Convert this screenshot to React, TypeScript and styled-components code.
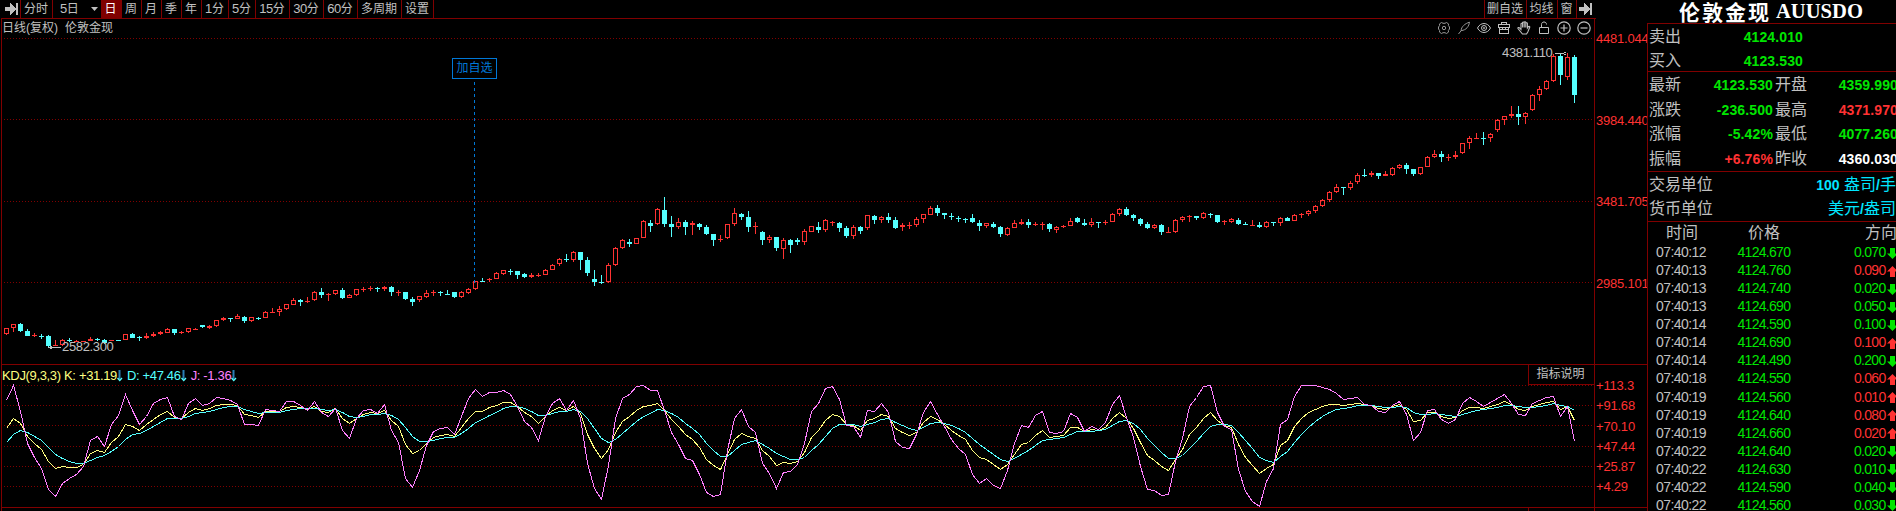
import React from 'react';
import styled, { createGlobalStyle } from 'styled-components';

const c = {
  line: '#800000',
  red: '#ff3232',
  green: '#00e600',
  cyan: '#54ffff',
  text: '#c0c0c0',
  aqua: '#00e5ff',
  blue: '#0078d7',
  k: '#ffff80',
  j: '#ff80ff',
};

const sans = '"Liberation Sans", "Noto Sans CJK SC", sans-serif';

const Global = createGlobalStyle`
  * { box-sizing: border-box; }
  html, body { margin: 0; background: #000; overflow: hidden; }
  body { font-family: ${sans}; color: ${c.text}; }
`;

const Screen = styled.div`
  width: 1896px;
  height: 511px;
  display: flex;
  background: #000;
  overflow: hidden;
`;

const Workspace = styled.div`
  width: 1647px;
  flex: none;
  display: flex;
  flex-direction: column;
`;

const Toolbar = styled.div`
  height: 19px;
  width: 1595px;
  display: flex;
  margin-left: 1px;
  padding-left: 2px;
  border-bottom: 1px solid ${c.line};
`;

const Tab = styled.div<{ $w: number; $active?: boolean; $last?: boolean }>`
  width: ${(p) => p.$w}px;
  height: 18px;
  flex: none;
  display: flex;
  align-items: center;
  justify-content: center;
  padding-right: 1px;
  border-right: 1px solid ${(p) => (p.$last ? 'transparent' : c.line)};
  font-size: 12px;
  line-height: 18px;
  white-space: nowrap;
  background: ${(p) => (p.$active ? c.line : 'transparent')};
  color: ${(p) => (p.$active ? '#fff' : c.text)};
`;

const Num = styled.span`
  font-size: 13px;
  letter-spacing: -0.4px;
`;

const Spring = styled.div`
  flex: 1;
  border-right: 1px solid ${c.line};
`;

const DayPick = styled.div`
  width: 48px;
  flex: none;
  display: flex;
  align-items: center;
  justify-content: space-between;
  padding: 0 3px 0 7px;
  font-size: 12px;
  line-height: 18px;
`;

const Body = styled.div`
  flex: 1;
  display: flex;
  margin-left: 1px;
  border-left: 1px solid ${c.line};
`;

const Charts = styled.div`
  width: 1592px;
  flex: none;
  display: flex;
  flex-direction: column;
`;

const PricePane = styled.div`
  position: relative;
  height: 346px;
  border-bottom: 1px solid ${c.line};
`;

const PaneHead = styled.div`
  height: 19px;
  display: flex;
  justify-content: space-between;
  font-size: 12px;
  line-height: 18px;
`;

const PaneTitle = styled.div`
  display: flex;
  gap: 7px;
`;

const IconRow = styled.div`
  display: flex;
  gap: 6px;
  padding: 2px 3px 0 0;
  svg { display: block; }
`;

const Plot = styled.svg`
  display: block;
  overflow: visible;
`;

const Callout = styled.div`
  position: absolute;
  left: 450px;
  top: 39px;
  width: 45px;
  height: 21px;
  border: 1px solid ${c.blue};
  color: ${c.blue};
  font-size: 12px;
  line-height: 19px;
  text-align: center;
`;

const KdjPane = styled.div`
  height: 143px;
  border-bottom: 1px solid ${c.line};
`;

const KdjHead = styled.div`
  height: 20px;
  display: flex;
  justify-content: space-between;
`;

const Legend = styled.div`
  display: flex;
  font-size: 13px;
  letter-spacing: -0.34px;
  line-height: 21px;
  white-space: pre;
`;

const Reading = styled.span<{ $color: string }>`
  display: flex;
  align-items: center;
  margin-right: 4px;
  color: ${(p) => p.$color};
`;

const HelpButton = styled.div`
  width: 66px;
  height: 20px;
  padding-right: 2px;
  border-left: 1px solid ${c.line};
  border-bottom: 1px solid ${c.line};
  font-size: 12px;
  line-height: 19px;
  text-align: center;
`;

const Foot = styled.div`
  flex: 1;
  margin-right: 65px;
  border-right: 1px solid ${c.line};
`;

const Axis = styled.div`
  width: 53px;
  flex: none;
  border-left: 1px solid ${c.line};
  overflow: hidden;
`;

const AxisBlock = styled.div<{ $h: number; $top: number }>`
  height: ${(p) => p.$h}px;
  padding-top: ${(p) => p.$top}px;
  border-bottom: 1px solid ${c.line};
`;

const AxisLabel = styled.div<{ $step: number }>`
  height: ${(p) => p.$step}px;
  padding-left: 1px;
  font-size: 13px;
  letter-spacing: -0.2px;
  line-height: 16px;
  color: ${c.red};
`;

const Side = styled.div`
  width: 249px;
  flex: none;
  overflow: hidden;
`;

const Title = styled.div`
  height: 23px;
  display: flex;
  align-items: center;
  gap: 7px;
  padding: 0 0 1px 32px;
  color: #fff;
  white-space: nowrap;
  font: 700 20.6px/20px "Liberation Serif", serif;
`;

const TitleName = styled.span`
  font: 700 21px/20px "Noto Sans CJK SC", sans-serif;
  letter-spacing: 2px;
  margin-right: -2px;
`;

const Panel = styled.div`
  border-left: 1px solid ${c.line};
`;

const Group = styled.div<{ $h: number; $pad: number }>`
  height: ${(p) => p.$h}px;
  padding-top: ${(p) => p.$pad}px;
  border-top: 1px solid ${c.line};
`;

const QuoteRow = styled.div<{ $h: number }>`
  height: ${(p) => p.$h}px;
  display: grid;
  grid-template-columns: 34px 90px 35px 90px;
  align-items: center;
  padding-left: 1px;
  white-space: nowrap;
`;

const DealRow = styled(QuoteRow)`
  grid-template-columns: 34px 120px;
`;

const Label = styled.span<{ $in?: number }>`
  padding-left: ${(p) => p.$in ?? 0}px;
  font-size: 16px;
  line-height: 20px;
  letter-spacing: -0.1px;
  color: ${c.text};
`;

const Value = styled.span<{ $color: string }>`
  text-align: right;
  font: 700 14px/20px ${sans};
  letter-spacing: 0.12px;
  color: ${(p) => p.$color};
`;

const UnitRow = styled.div`
  height: 24px;
  display: flex;
  justify-content: space-between;
  align-items: center;
  white-space: nowrap;
  padding-left: 1px;
`;

const UnitValue = styled.span`
  font-size: 16px;
  line-height: 20px;
  color: ${c.aqua};
  b { font: 700 14px/20px ${sans}; }
`;

const TickHead = styled.div`
  height: 21px;
  display: grid;
  grid-template-columns: 82px 117px 40px;
  align-items: center;
  padding-left: 18px;
  white-space: nowrap;
`;

const TickRow = styled.div`
  height: 18.07px;
  display: grid;
  grid-template-columns: 81.5px 90px 58px 11px;
  align-items: center;
  padding-left: 8px;
  width: 260px;
  font-size: 14px;
  letter-spacing: -0.7px;
  line-height: 18px;
`;

const Time = styled.span`
  letter-spacing: -0.58px;
`;

const Tone = styled.span<{ $color: string; $right?: boolean }>`
  color: ${(p) => p.$color};
  text-align: ${(p) => (p.$right ? 'right' : 'left')};
`;

const TickArrow = styled.svg`
  display: block;
  margin: 1px 0 0 1px;
`;

/* Each candle: direction, then high / body top / body bottom / low. */
const CANDLES = `r328 328 334 335|r324 324 328 332|c323 324 331 332|c329 331 336 336|r333 335 336 337|c334 336 337 339|c335 336 346 348|r340 345 346 346|r339 340 345 346|c338 340 341 342|r340 341 342 342|r341 341 342 342|r337 339 341 341|c338 339 340 341|c339 340 343 344|r340 340 341 341|c340 340 341 341|r334 334 340 340|c333 334 338 338|c336 337 338 341|r333 336 338 339|r332 334 336 337|r331 332 334 335|r328 329 333 333|c329 329 333 335|r331 332 333 334|r328 328 332 333|r328 329 330 330|c325 325 327 328|r325 326 328 329|r320 320 326 327|r317 318 320 321|c318 318 319 322|r314 316 319 319|c316 317 321 323|r317 317 321 322|c317 318 319 320|r311 312 318 318|r308 312 313 313|r306 309 312 316|r304 304 309 310|r298 300 305 305|c299 300 302 306|r297 301 302 303|r291 292 300 301|c288 292 295 298|r293 294 295 301|r290 290 294 295|c288 290 298 299|r294 295 298 298|r289 289 295 296|r287 289 290 292|r286 288 289 291|c287 288 289 292|r286 287 289 291|c286 287 292 296|r290 292 293 296|c292 292 299 300|c297 299 302 306|r296 296 300 302|r290 293 297 298|r290 292 293 296|c291 292 293 296|c290 294 295 295|c292 292 297 298|r291 292 297 298|r288 289 293 294|r281 281 289 290|c278 281 282 282|r278 279 280 282|r272 273 279 279|r270 270 274 275|c269 271 272 275|c271 271 275 279|c273 274 277 278|r273 275 277 278|r273 275 276 277|r269 270 275 275|r264 265 270 270|r258 259 264 266|c254 259 260 262|r251 252 260 262|c252 252 260 270|c257 260 273 276|c270 279 282 286|c275 282 283 284|r263 265 282 283|r247 248 265 266|r239 240 248 249|c239 242 244 247|r238 238 244 244|r220 221 238 238|c220 223 226 232|r208 209 224 225|c197 210 224 227|c216 224 227 237|r218 222 227 229|c220 222 227 235|r221 223 225 235|c223 224 227 230|c225 227 234 235|c234 234 240 246|r235 239 240 242|r224 224 238 239|r208 213 224 226|c213 214 217 220|c211 217 227 232|r222 226 227 234|c231 232 240 245|r235 237 240 243|c237 237 248 251|r238 240 249 259|c239 240 245 253|c238 240 242 245|r229 231 242 245|r226 226 232 232|c222 227 230 233|r219 220 230 232|r221 222 223 226|c222 223 228 232|c226 228 236 238|r225 227 236 239|c226 227 231 234|r215 215 228 230|c215 216 220 224|r216 217 220 223|c213 217 220 223|c217 220 228 229|r223 225 227 231|r222 225 226 229|r217 219 225 227|r214 214 219 223|r206 208 215 215|c205 208 213 216|c213 213 215 219|c213 216 217 220|c216 218 219 222|c218 219 220 223|c214 218 222 223|c220 223 226 231|r223 223 226 228|c222 224 227 228|c226 227 234 237|r227 228 235 236|r220 223 228 228|r219 222 224 225|c219 222 225 228|r222 224 225 226|r222 224 225 230|c223 224 229 232|r226 227 230 233|r225 226 227 228|r218 221 226 226|c217 218 222 223|c219 223 225 226|r218 222 225 227|c222 222 223 228|r220 222 223 225|r213 214 222 222|r208 209 214 216|c207 209 215 216|c214 215 218 221|c218 219 224 226|c222 224 228 229|r224 225 228 229|c224 225 232 235|r227 232 233 233|r219 220 232 233|r216 217 220 222|r215 216 217 222|c216 216 218 220|r212 213 218 219|c213 214 215 218|c215 215 222 223|r220 221 222 225|r218 219 222 223|c218 220 224 225|c222 224 225 225|r220 225 226 226|c222 225 227 228|r221 222 227 228|c222 222 223 226|r217 218 223 226|c217 218 221 221|r214 215 221 221|r213 214 215 218|r210 211 214 216|r205 206 211 213|r199 200 206 207|r191 192 200 202|r184 187 192 193|c187 187 188 195|r181 183 188 190|r173 175 182 184|c169 175 176 177|r171 173 175 177|c173 173 176 179|r171 174 176 176|r167 168 175 176|r164 165 168 169|c163 165 169 174|c169 169 174 176|r167 167 174 175|r156 157 167 167|r150 154 157 158|c151 154 157 162|r154 157 158 161|r151 155 157 159|r143 143 153 154|r136 138 143 149|r133 138 139 139|c132 138 139 145|r133 134 138 142|r119 120 130 132|r116 116 120 125|r106 114 116 118|c106 114 117 125|r112 113 117 124|r94 95 110 111|r86 89 95 101|r80 81 89 90|r54 56 81 82|c54 56 75 85|r53 57 77 80|c55 57 95 103`
  .split('|')
  .map((s) => ({ up: s[0] === 'r', v: s.slice(1).split(' ').map(Number) }));

const J = `400 385 411 443 457 468 489 496 483 478 474 466 440 436 446 424 415 394 410 424 416 403 399 397 416 419 403 398 405 403 397 398 400 404 424 424 425 409 410 411 401 401 405 410 401 412 416 408 430 438 418 410 409 413 404 430 442 478 487 470 445 431 428 427 434 416 398 389 396 392 392 390 394 406 421 427 440 416 403 398 410 400 418 463 488 499 465 418 398 394 386 385 390 390 410 432 444 458 460 474 492 496 494 450 418 409 426 432 463 473 488 472 471 464 443 411 403 388 386 399 425 426 437 410 411 403 412 441 447 448 434 412 401 414 426 439 448 454 474 483 478 485 488 470 443 425 427 415 411 432 433 431 413 417 431 426 429 422 404 395 417 437 466 489 490 495 494 461 438 406 397 386 385 412 426 429 469 491 501 506 481 468 424 419 396 385 385 385 387 389 393 399 398 397 404 405 411 412 405 401 414 440 432 410 409 419 423 419 403 397 401 406 402 398 394 403 414 415 403 400 397 396 416 406 441`
  .split(' ')
  .map(Number);

const K = `428 418 423 436 443 449 461 468 466 467 467 464 453 450 452 442 436 424 426 430 424 419 414 411 417 418 412 408 410 408 405 404 404 405 414 415 417 411 411 411 407 406 407 409 406 411 412 408 418 423 418 414 412 413 410 420 426 444 453 450 443 437 435 434 436 427 418 411 411 407 405 402 402 406 412 416 423 416 410 407 410 406 413 434 448 458 449 432 421 416 410 406 405 403 410 419 426 434 439 447 459 465 469 454 439 433 436 438 450 456 465 462 463 461 452 437 430 420 414 416 424 425 430 420 418 414 416 428 432 435 432 422 416 419 424 430 435 439 450 457 459 464 469 464 454 444 442 435 430 437 436 435 427 427 431 429 430 427 418 412 418 428 442 455 460 466 470 459 449 434 427 418 412 420 425 427 444 457 465 473 468 464 445 440 426 418 412 409 406 404 404 405 404 403 404 405 408 409 406 404 409 421 420 412 412 416 418 417 410 407 407 408 406 404 401 404 409 410 406 404 402 401 409 406 420`
  .split(' ')
  .map(Number);

// D is the 1/3 smoothed K line.
const D = K.reduce<number[]>((acc, k, i) => {
  acc.push(i === 0 ? 442 : (acc[i - 1] * 2 + k) / 3);
  return acc;
}, []);

const xAt = (i: number) => 6 + 7 * i;
const path = (ys: number[]) => ys.map((y, i) => `${xAt(i) + 0.5},${Math.round(y) + 0.5}`).join(' ');

const Grid = ({ rows }: { rows: number[] }) => (
  <g stroke={c.line} strokeDasharray="1 2">
    {rows.map((y) => (
      <line key={y} x1={4} x2={1592} y1={y + 0.5} y2={y + 0.5} />
    ))}
  </g>
);

const Candle = ({ i }: { i: number }) => {
  const { up, v } = CANDLES[i];
  const [h, t, b, l] = v;
  const x = xAt(i);
  const color = up ? c.red : c.cyan;
  const hollow = up && b - t > 2;
  return (
    <g fill={color}>
      {t > h && <rect x={x} y={h} width={1} height={t - h} />}
      {l > b && <rect x={x} y={b} width={1} height={l - b} />}
      {hollow ? (
        <rect x={x - 1.5} y={t + 0.5} width={4} height={b - t - 1} fill="none" stroke={color} />
      ) : (
        <rect x={x - 2} y={t} width={5} height={b - t} />
      )}
    </g>
  );
};

const SkipIcon = () => (
  <svg width="13" height="12" viewBox="0 0 13 12" fill={c.text} shapeRendering="crispEdges">
    <path d="M0 4h5V0l6 6-6 6V8H0z" />
    <rect x="11" y="0" width="2" height="12" />
  </svg>
);

const icon = { width: 14, height: 14, viewBox: '0 0 14 14', fill: 'none', stroke: c.text, strokeWidth: 1 };

const ToolIcons = () => (
  <IconRow>
    <svg {...icon} stroke="#969696">
      <path d="M4.500 1.500l1.500.8h2l1.500-.8 2 1.400-.1 1.700 1.100 1.400v2l-1.100 1.400.1 1.700-2 1.400-1.500-.8h-2l-1.500.8-2-1.400.1-1.700L1.500 8V6l1.100-1.400-.1-1.700z" />
      <circle cx="7" cy="7" r="1.700" />
    </svg>
    <svg {...icon} stroke="#969696">
      <path d="M1.500 13 4.500 9.200M4.200 9.600C4 6 8 2.500 12.500 1.200 12 5 9.500 9.200 4.200 9.600z" />
    </svg>
    <svg {...icon}>
      <path d="M.5 7C2 4 4.500 2.500 7 2.500S12 4 13.500 7C12 10 9.500 11.500 7 11.500S2 10 .5 7z" />
      <circle cx="7" cy="7" r="2.500" />
      <circle cx="7" cy="7" r=".5" fill={c.text} />
    </svg>
    <svg {...icon} shapeRendering="crispEdges">
      <path d="M4.500 3.500v-2h5v2M1.500 3.500h11v3h-11zM2.500 6.500v6h9v-6M5.500 6.500v2M8.500 6.500v2M2.500 8.500h9" />
    </svg>
    <svg {...icon} strokeWidth={1.1}>
      <path d="M4 8.500V3a.8.8 0 0 1 1.600 0v3.500V1.800a.8.8 0 0 1 1.600 0v4.700V1.500a.8.8 0 0 1 1.600 0v5V2.500a.8.8 0 0 1 1.600 0V7l1.100-1.500c.8-.5 1.500.1 1.200.8L10.800 11 9.500 13H5.500L1 7.500c-.3-.9.6-1.300 1.200-.8z" />
    </svg>
    <svg {...icon}>
      <path d="M2.500 6.500h9v6h-9zM4.500 6V3.500c0-1.500 1-2.500 2.500-2.500s2.500 1 2.500 2.500" />
    </svg>
    <svg {...icon} strokeWidth={1.2}>
      <circle cx="7" cy="7" r="6.200" />
      <path d="M7 3.500v7M3.500 7h7" />
    </svg>
    <svg {...icon} strokeWidth={1.2}>
      <circle cx="7" cy="7" r="6.200" />
      <path d="M3.500 7h7" />
    </svg>
  </IconRow>
);

const Drop = () => (
  <svg width="6" height="13" viewBox="0 0 6 13" fill="none">
    <path d="M2.500 1v9" stroke="#2a7fb5" strokeWidth="2" />
    <path d="M.5 9l2.250 2.500L5 9" stroke={c.cyan} strokeWidth="1.300" />
  </svg>
);

const Arrow = ({ up }: { up: boolean }) => (
  <TickArrow width="11" height="12" viewBox="0 0 11 12">
    <path
      d={up ? 'M5.500 1 11 6.500H8V12H3V6.500H0z' : 'M5.500 12 11 6.500H8V1H3v5.500H0z'}
      fill={up ? c.red : c.green}
    />
  </TickArrow>
);

const QUOTES: [string, string, string, string, string, string][] = [
  ['最新', '4123.530', c.green, '开盘', '4359.990', c.green],
  ['涨跌', '-236.500', c.green, '最高', '4371.970', c.red],
  ['涨幅', '-5.42%', c.green, '最低', '4077.260', c.green],
  ['振幅', '+6.76%', c.red, '昨收', '4360.030', '#fff'],
];

const TICKS: [string, string, string, boolean][] = [
  ['07:40:12', '4124.670', '0.070', false],
  ['07:40:13', '4124.760', '0.090', true],
  ['07:40:13', '4124.740', '0.020', false],
  ['07:40:13', '4124.690', '0.050', false],
  ['07:40:14', '4124.590', '0.100', false],
  ['07:40:14', '4124.690', '0.100', true],
  ['07:40:14', '4124.490', '0.200', false],
  ['07:40:18', '4124.550', '0.060', true],
  ['07:40:19', '4124.560', '0.010', true],
  ['07:40:19', '4124.640', '0.080', true],
  ['07:40:19', '4124.660', '0.020', true],
  ['07:40:22', '4124.640', '0.020', false],
  ['07:40:22', '4124.630', '0.010', false],
  ['07:40:22', '4124.590', '0.040', false],
  ['07:40:22', '4124.560', '0.030', false],
];

const PERIODS: [string, string, number][] = [
  ['', '周', 20],
  ['', '月', 20],
  ['', '季', 20],
  ['', '年', 20],
  ['1', '分', 27],
  ['5', '分', 27],
  ['15', '分', 34],
  ['30', '分', 34],
  ['60', '分', 34],
  ['', '多周期', 44],
  ['', '设置', 32],
];

export default function App() {
  return (
    <Screen>
      <Global />
      <Workspace>
        <Toolbar>
          <Tab $w={18}><SkipIcon /></Tab>
          <Tab $w={32}>分时</Tab>
          <DayPick>
            <span><Num>5</Num>日</span>
            <svg width="7" height="4" viewBox="0 0 7 4"><path d="M0 0h7L3.500 4z" fill={c.text} /></svg>
          </DayPick>
          <Tab $w={21} $active>日</Tab>
          {PERIODS.map(([n, t, w]) => (
            <Tab key={n + t} $w={w}>{n && <Num>{n}</Num>}{t}</Tab>
          ))}
          <Spring />
          <Tab $w={42}>删自选</Tab>
          <Tab $w={31}>均线</Tab>
          <Tab $w={19}>窗</Tab>
          <Tab $w={19} $last><SkipIcon /></Tab>
        </Toolbar>
        <Body>
          <Charts>
            <PricePane>
              <PaneHead>
                <PaneTitle><span>日线(复权)</span><span>伦敦金现</span></PaneTitle>
                <ToolIcons />
              </PaneHead>
              <Plot width={1592} height={326} viewBox="2 38 1592 326" shapeRendering="crispEdges">
                <Grid rows={[38, 119, 201, 282]} />
                {CANDLES.map((_, i) => <Candle key={i} i={i} />)}
                <line x1={474.5} x2={474.5} y1={82} y2={283} stroke={c.blue} strokeDasharray="3 3" />
                <g fill={c.text} fontSize={13} letterSpacing={-0.35}>
                  <text x={62} y={351}>2582.300</text>
                  <text x={1502} y={57}>4381.110</text>
                  <path d="M48 347h13v1H48zM48 347.500l4-2v4z" />
                  <path d="M1555 53h13v1h-13zM1568 53.500l-4-2v4z" />
                </g>
              </Plot>
              <Callout>加自选</Callout>
            </PricePane>
            <KdjPane>
              <KdjHead>
                <Legend>
                  <Reading $color={c.k}>KDJ(9,3,3) K: +31.19<Drop /></Reading>
                  <Reading $color={c.cyan}>D: +47.46<Drop /></Reading>
                  <Reading $color={c.j}>J: -1.36<Drop /></Reading>
                </Legend>
                <HelpButton>指标说明</HelpButton>
              </KdjHead>
              <Plot width={1592} height={122} viewBox="2 385 1592 122" shapeRendering="crispEdges">
                <Grid rows={[385, 405, 425, 446, 466, 486]} />
                <g fill="none">
                  <polyline points={path(K)} stroke={c.k} />
                  <polyline points={path(D)} stroke={c.cyan} />
                  <polyline points={path(J)} stroke={c.j} />
                </g>
              </Plot>
            </KdjPane>
            <Foot />
          </Charts>
          <Axis>
            <AxisBlock $h={346} $top={12}>
              {['4481.044', '3984.440', '3481.705', '2985.101'].map((t) => (
                <AxisLabel key={t} $step={81.5}>{t}</AxisLabel>
              ))}
            </AxisBlock>
            <AxisBlock $h={143} $top={13}>
              {['+113.3', '+91.68', '+70.10', '+47.44', '+25.87', '+4.29'].map((t) => (
                <AxisLabel key={t} $step={20.25}>{t}</AxisLabel>
              ))}
            </AxisBlock>
          </Axis>
        </Body>
      </Workspace>
      <Side>
        <Title><TitleName>伦敦金现</TitleName>AUUSDO</Title>
        <Panel>
          <Group $h={48} $pad={1}>
            <DealRow $h={24}><Label>卖出</Label><Value $color={c.green}>4124.010</Value></DealRow>
            <DealRow $h={24}><Label>买入</Label><Value $color={c.green}>4123.530</Value></DealRow>
          </Group>
          <Group $h={100} $pad={1}>
            {QUOTES.map(([a, av, ac, b, bv, bc]) => (
              <QuoteRow key={a} $h={24.6}>
                <Label>{a}</Label>
                <Value $color={ac}>{av}</Value>
                <Label $in={2}>{b}</Label>
                <Value $color={bc}>{bv}</Value>
              </QuoteRow>
            ))}
          </Group>
          <Group $h={50} $pad={1}>
            <UnitRow><Label>交易单位</Label><UnitValue><b>100</b> 盎司<b>/</b>手</UnitValue></UnitRow>
            <UnitRow><Label>货币单位</Label><UnitValue>美元<b>/</b>盎司</UnitValue></UnitRow>
          </Group>
          <Group $h={290} $pad={0}>
            <TickHead><Label>时间</Label><Label>价格</Label><Label>方向</Label></TickHead>
            {TICKS.map(([t, p, d, up], i) => (
              <TickRow key={i}>
                <Time>{t}</Time>
                <Tone $color={c.green}>{p}</Tone>
                <Tone $color={up ? c.red : c.green} $right>{d}</Tone>
                <Arrow up={up} />
              </TickRow>
            ))}
          </Group>
        </Panel>
      </Side>
    </Screen>
  );
}
